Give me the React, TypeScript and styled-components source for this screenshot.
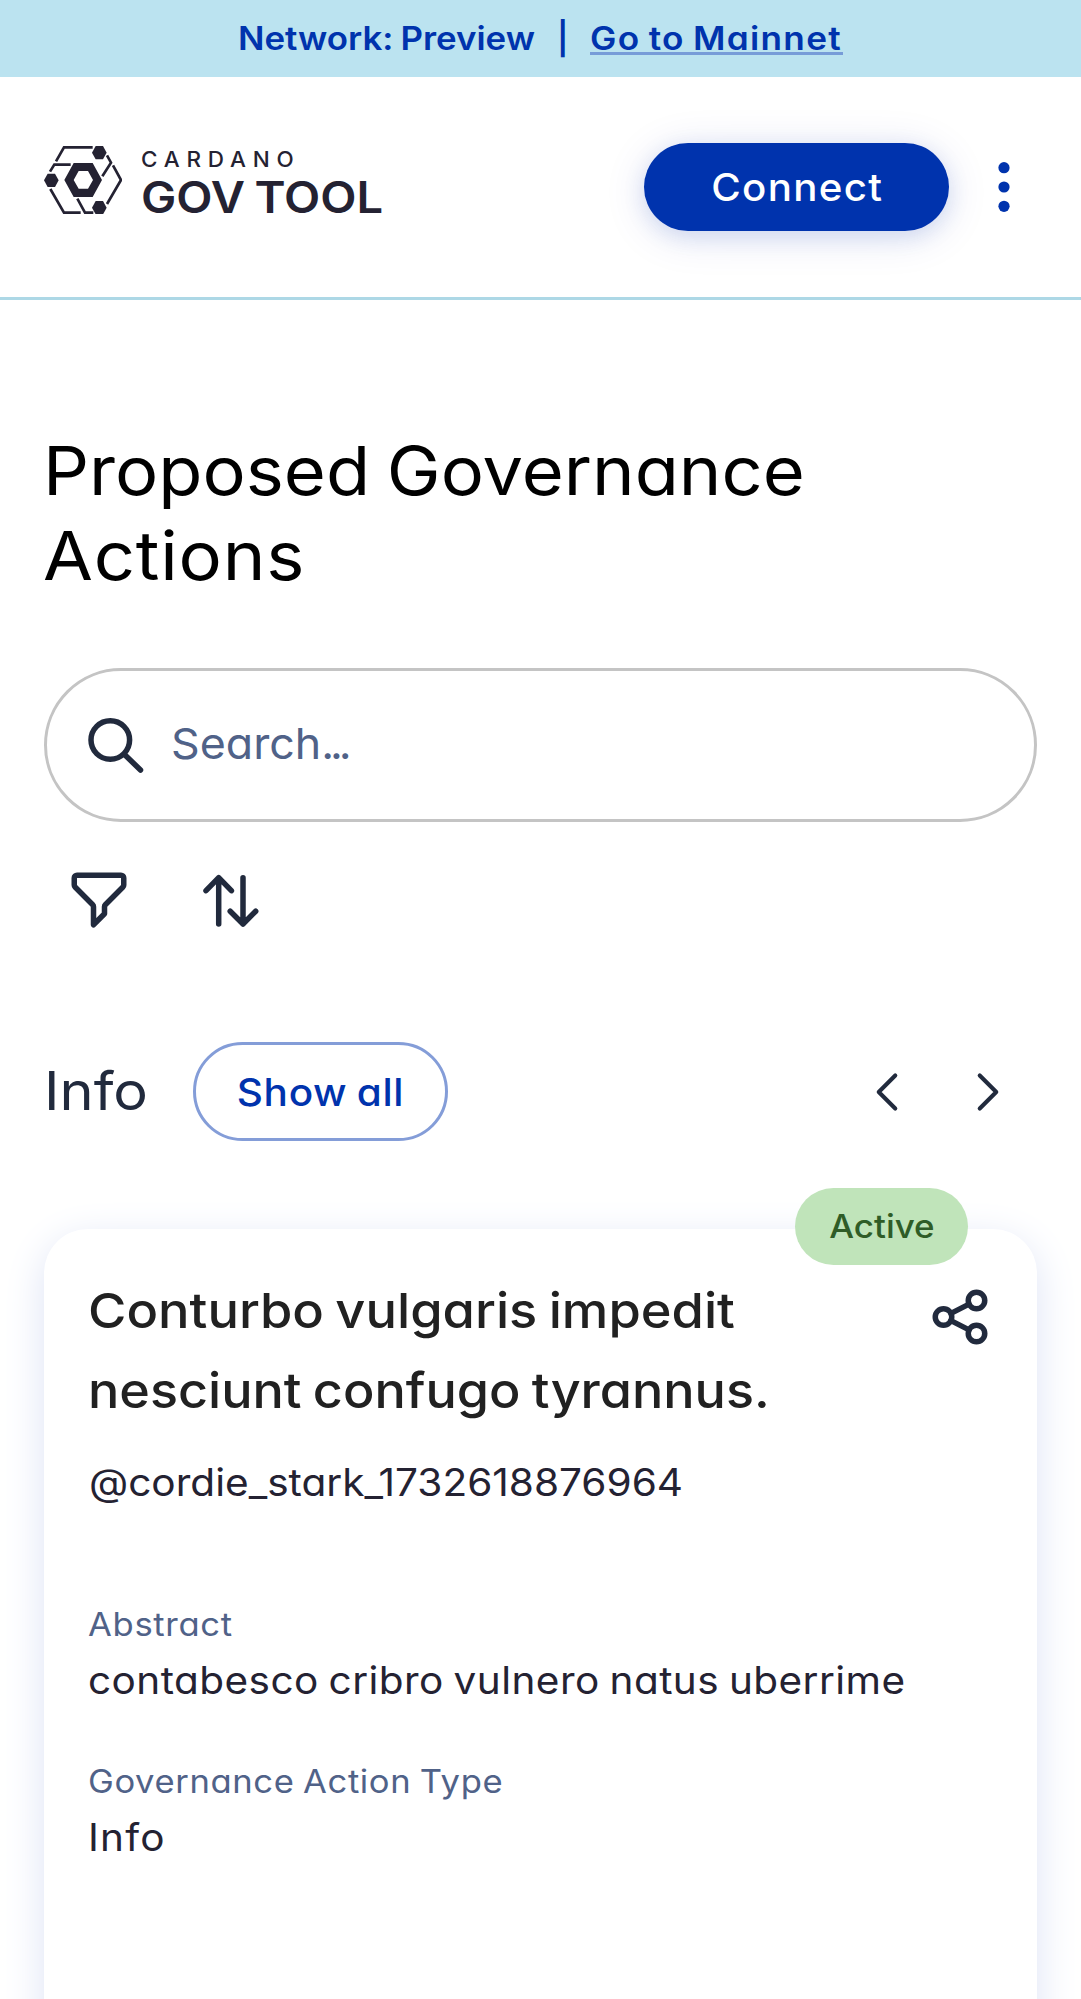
import React from "react";
import styled, { createGlobalStyle } from "styled-components";

const color = {
  blue: "#0033ad",
  ink: "#242232",
  navy: "#212a3d",
  slate: "#506288",
};

const GlobalStyle = createGlobalStyle`
  *, *::before, *::after { box-sizing: border-box; }
  html, body { margin: 0; padding: 0; background: #fff; }
  body {
    font-family: Inter, "Open Sans", "Liberation Sans", sans-serif;
    font-feature-settings: "cv11";
    overflow: hidden;
  }
  h1, h2, h3, p { margin: 0; font-weight: 400; }
  button { font: inherit; font-feature-settings: inherit; border: 0; padding: 0; background: none; cursor: pointer; }
  svg { display: block; flex: none; }
`;

const Page = styled.div`
  width: 1081px;
  height: 1999px;
  display: flex;
  flex-direction: column;
  overflow: hidden;
  background: #fff;
`;

/* Widened text: $wide stretches the letterforms, $ls adds tracking. */
const Wide = styled.span<{ $wide?: number; $ls?: number; $pull?: number; $center?: boolean }>`
  display: inline-block;
  transform: scaleX(${(p) => p.$wide ?? 1.08});
  transform-origin: ${(p) => (p.$center ? "center" : "left")};
  letter-spacing: ${(p) => p.$ls ?? 0}px;
  word-spacing: -0.05em;
  margin-left: ${(p) => -(p.$pull ?? 0)}px;
  margin-right: ${(p) => -(p.$ls ?? 0)}px;
  white-space: nowrap;
`;

const Banner = styled.div`
  height: 77px;
  flex: none;
  display: flex;
  align-items: center;
  padding-left: 238px;
  background: #bbe3f0;
  color: ${color.blue};
  font-size: 32px;
  font-weight: 600;
  line-height: 50px;
`;

const NetworkName = styled.span`
  width: 319px;
`;

const Divider = styled.span`
  width: 33px;
`;

const MainnetLink = styled.a`
  width: 253px;
  height: 33px;
  align-self: flex-start;
  margin-top: 22px;
  padding-top: 3px;
  line-height: 27px;
  border-bottom: 3px solid #779cd8;
`;

const Header = styled.header`
  height: 223px;
  flex: none;
  display: flex;
  align-items: center;
  padding: 0 44px;
  border-bottom: 3px solid #add8e6;
`;

const Logo = styled.div`
  display: flex;
  align-self: flex-start;
  margin-top: 69px;
  gap: 19px;
  color: ${color.ink};
`;

const LogoText = styled.div`
  display: flex;
  flex-direction: column;
  gap: 3px;
  padding-top: 0.5px;
`;

const LogoTop = styled.span`
  font-size: 21.2px;
  line-height: 24px;
  font-weight: 500;
`;

const LogoBottom = styled.span`
  font-size: 43.5px;
  line-height: 46px;
  font-weight: 600;
`;

const ConnectButton = styled.button`
  width: 305px;
  height: 88px;
  margin-left: auto;
  border-radius: 44px;
  background: ${color.blue};
  color: #fff;
  font-size: 38px;
  font-weight: 500;
  box-shadow: 0 5.5px 22px rgba(0, 51, 173, 0.12), 0 5.5px 44px rgba(0, 51, 173, 0.12);
`;

const MenuButton = styled.button`
  width: 66px;
  height: 66px;
  margin: 0 0 0 22px;
  color: ${color.blue};
`;

const Main = styled.main`
  flex: 1;
  display: flex;
  flex-direction: column;
  padding: 127.5px 44px 0;
`;

const Title = styled.h1`
  font-size: 67px;
  line-height: 85px;
  color: #000;
`;

const Line = styled.span`
  display: block;
`;

const SearchBox = styled.div`
  height: 154px;
  margin-top: 70px;
  display: flex;
  align-items: center;
  padding-left: 35px;
  gap: 23px;
  border: 3px solid #c4c4c4;
  border-radius: 77px;
  color: ${color.slate};
  font-size: 43px;
  line-height: 60px;
`;

const Placeholder = styled.span`
  padding-bottom: 3px;
`;

const Dots = styled.span`
  letter-spacing: -4px;
`;

const ToolRow = styled.div`
  display: flex;
  gap: 66px;
  margin-top: 45px;
  padding-left: 22px;
  color: ${color.navy};
`;

const SectionHead = styled.div`
  height: 99px;
  margin-top: 109px;
  display: flex;
  align-items: center;
  color: ${color.navy};
`;

const SectionName = styled.h2`
  width: 149px;
  font-size: 53.5px;
  line-height: 76px;
`;

const ShowAll = styled.button`
  width: 255px;
  height: 99px;
  padding-top: 2px;
  border: 3px solid #849dd8;
  border-radius: 50px;
  color: ${color.blue};
  font-size: 37.5px;
  font-weight: 500;
`;

const Arrows = styled.div`
  display: flex;
  gap: 35px;
  margin-left: auto;
  padding: 1px 16px 0 0;
`;

const Card = styled.article`
  position: relative;
  flex: 1;
  margin: 88px 0 -90px;
  padding: 42.5px 44.5px 0;
  border-radius: 44px;
  background: #fff;
  box-shadow: 0 11px 41px #dde3f5;
`;

const Status = styled.span`
  position: absolute;
  top: -41px;
  right: 69px;
  width: 173px;
  height: 77px;
  display: flex;
  align-items: center;
  justify-content: center;
  border-radius: 39px;
  background: #c0e4ba;
  color: #2f5c27;
  font-size: 32.5px;
  font-weight: 500;
`;

const CardTop = styled.div`
  display: flex;
  justify-content: space-between;
`;

const CardTitle = styled.h3`
  font-size: 48.5px;
  line-height: 79.75px;
  font-weight: 500;
  color: #212121;
`;

const ShareButton = styled.button`
  align-self: flex-start;
  margin-top: 12.5px;
  color: ${color.navy};
`;

const Handle = styled.p`
  margin-top: 23px;
  font-size: 37.5px;
  line-height: 58px;
  color: ${color.ink};
`;

const Field = styled.div<{ $top: number }>`
  margin-top: ${(p) => p.$top}px;
`;

const Label = styled.p`
  font-size: 32px;
  line-height: 50px;
  color: ${color.slate};
`;

const Value = styled.p`
  margin-top: 2px;
  font-size: 37.5px;
  line-height: 58px;
  color: ${color.ink};
`;

type IconProps = { children: React.ReactNode; weight?: number };

const Icon = ({ children, weight = 2 }: IconProps) => (
  <svg width="66" height="66" viewBox="0 0 24 24" fill="none" stroke="currentColor" strokeWidth={weight} strokeLinecap="round" strokeLinejoin="round">
    {children}
  </svg>
);

const NODE = "M-22 0L-11 -20H11L22 0L11 20H-11Z";

const LogoMark = () => (
  <svg width="78" height="68" viewBox="42 48 234 204" fill="none" stroke="currentColor" strokeWidth="8">
    <path d="M78 94L102 52H188M60 125L73 104H122M61 177L102 248H152M142 206L165 248H190M231 76L243 98L217 139M249 106L273 150L231 222" />
    <g fill="currentColor" stroke="none">
      <path fillRule="evenodd" d="M103 150L131 99H188L216 150L188 201H131ZM131 150L146 176H174L189 150L174 123H146Z" />
      <path d={NODE} transform="translate(208 68)" />
      <path d={NODE} transform="translate(64 151)" />
      <path d={NODE} transform="translate(208 233)" />
    </g>
  </svg>
);

export default function App() {
  return (
    <>
      <GlobalStyle />
      <Page>
        <Banner>
          <NetworkName><Wide $wide={1.09}>Network: Preview</Wide></NetworkName>
          <Divider>|</Divider>
          <MainnetLink><Wide $wide={1.1} $ls={1.15}>Go to Mainnet</Wide></MainnetLink>
        </Banner>
        <Header>
          <Logo>
            <LogoMark />
            <LogoText>
              <LogoTop><Wide $wide={1.06} $ls={6.4}>CARDANO</Wide></LogoTop>
              <LogoBottom><Wide $wide={1.083}>GOV TOOL</Wide></LogoBottom>
            </LogoText>
          </Logo>
          <ConnectButton><Wide $center $wide={1.06} $ls={1.24}>Connect</Wide></ConnectButton>
          <MenuButton aria-label="Menu">
            <svg width="66" height="66" viewBox="0 0 66 66" fill="currentColor">
              <circle cx="33" cy="13.7" r="5.6" />
              <circle cx="33" cy="33" r="5.6" />
              <circle cx="33" cy="52.3" r="5.6" />
            </svg>
          </MenuButton>
        </Header>
        <Main>
          <Title>
            <Line><Wide $wide={1.077} $pull={1.5}>Proposed Governance</Wide></Line>
            <Line><Wide $wide={1.08} $ls={0.7} $pull={1}>Actions</Wide></Line>
          </Title>
          <SearchBox>
            <svg width="66" height="66" viewBox="0 0 66 66" fill="none" stroke={color.navy} strokeWidth="5.5" strokeLinecap="round">
              <circle cx="28.3" cy="28" r="19.3" />
              <path d="M43 43L58.5 58" />
            </svg>
            <Placeholder><Wide $wide={1.04}>Search<Dots>...</Dots></Wide></Placeholder>
          </SearchBox>
          <ToolRow>
            <Icon>
              <path d="M3 4a1 1 0 0 1 1-1h16a1 1 0 0 1 1 1v2.586a1 1 0 0 1-.293.707l-6.414 6.414a1 1 0 0 0-.293.707V17l-4 4v-6.586a1 1 0 0 0-.293-.707L3.293 7.293A1 1 0 0 1 3 6.586V4z" />
            </Icon>
            <svg width="66" height="66" viewBox="0 0 66 66" fill="none" stroke="currentColor" strokeWidth="5.5" strokeLinecap="round" strokeLinejoin="round">
              <path d="M20.7 57V10.7M8 23.7L20.7 10.7L33.4 23.7M45 10.7V57M32.2 44.2L45 57L57.7 44.2" />
            </svg>
          </ToolRow>
          <SectionHead>
            <SectionName><Wide $wide={1.08}>Info</Wide></SectionName>
            <ShowAll><Wide $center $wide={1.08} $ls={0.6}>Show all</Wide></ShowAll>
            <Arrows>
              <Icon weight={1.5}><path d="M15 18L9 12L15 6" /></Icon>
              <Icon weight={1.5}><path d="M9 18L15 12L9 6" /></Icon>
            </Arrows>
          </SectionHead>
          <Card>
            <Status><Wide $center $wide={1.076}>Active</Wide></Status>
            <CardTop>
              <CardTitle>
                <Line><Wide $wide={1.08} $pull={1}>Conturbo vulgaris impedit</Wide></Line>
                <Line><Wide $wide={1.074} $pull={0.5}>nesciunt confugo tyrannus.</Wide></Line>
              </CardTitle>
              <ShareButton aria-label="Share">
                <Icon>
                  <circle cx="6" cy="12" r="3" />
                  <circle cx="18" cy="6" r="3" />
                  <circle cx="18" cy="18" r="3" />
                  <path d="M8.7 10.7L15.3 7.3M8.7 13.3L15.3 16.7" />
                </Icon>
              </ShareButton>
            </CardTop>
            <Handle><Wide $wide={1.082}>@cordie_stark_1732618876964</Wide></Handle>
            <Field $top={88}>
              <Label><Wide $ls={0.65} $pull={1}>Abstract</Wide></Label>
              <Value><Wide $ls={0.42} $pull={1}>contabesco cribro vulnero natus uberrime</Wide></Value>
            </Field>
            <Field $top={47}>
              <Label><Wide $ls={0.58} $pull={1}>Governance Action Type</Wide></Label>
              <Value><Wide $ls={1.1} $pull={1}>Info</Wide></Value>
            </Field>
          </Card>
        </Main>
      </Page>
    </>
  );
}
